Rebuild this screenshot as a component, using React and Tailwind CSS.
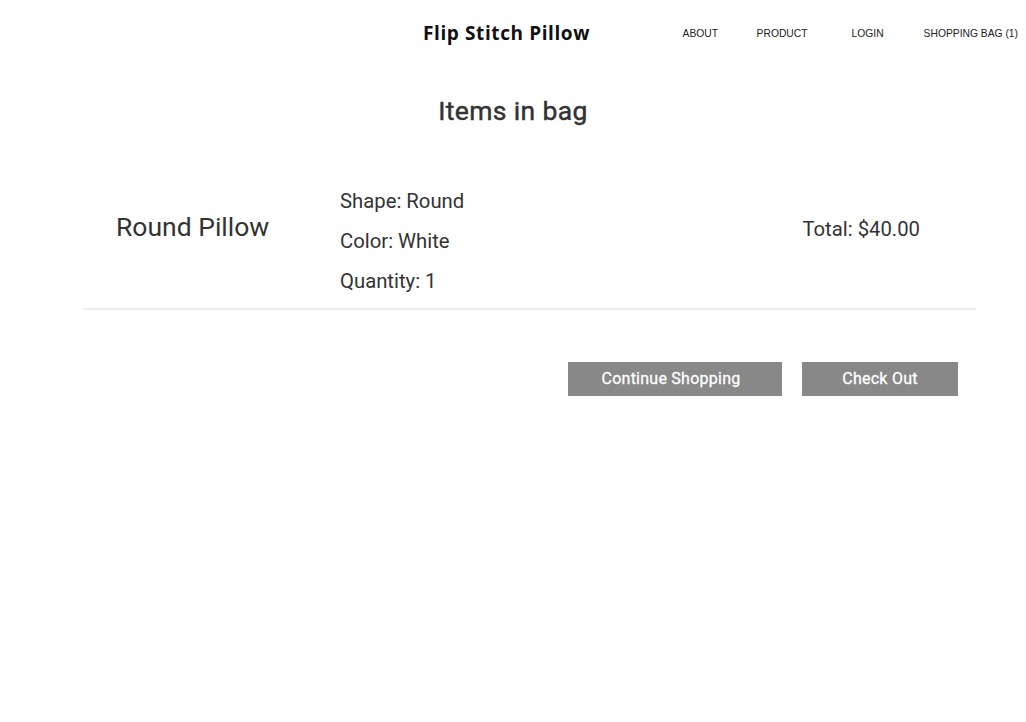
export default function App() {
  return (
    <div className="min-h-[722px] w-[1026px] bg-white" style={{ fontFamily: 'Roboto, sans-serif' }}>
      {/* Header */}
      <header className="flex h-[66px] items-center">
        <div
          className="ml-[423px] text-[19px] font-bold tracking-[0.6px] text-[#111]"
          style={{ fontFamily: '"Open Sans", sans-serif' }}
        >
          Flip Stitch Pillow
        </div>
        <nav
          className="ml-auto mt-[1px] flex items-center text-[10.3px] text-[#222]"
          style={{ fontFamily: '"Liberation Sans", Arial, sans-serif' }}
        >
          <a className="w-[74px]">ABOUT</a>
          <a className="w-[95px]">PRODUCT</a>
          <a className="w-[72px]">LOGIN</a>
          <a className="pr-[8px]">SHOPPING BAG (1)</a>
        </nav>
      </header>

      {/* Title */}
      <h1 className="mt-[29px] text-center text-[26.5px] leading-[32px] font-normal tracking-[0.35px] text-[#333] [-webkit-text-stroke:0.45px_#333]">
        Items in bag
      </h1>

      {/* Item row */}
      <div className="ml-[83px] mt-[54px] flex w-[893px] items-start border-b-2 border-[#ececec] pb-[7px] text-[#333]">
        <div className="mt-[30px] w-[257px] pl-[33px] text-[26.5px] leading-[32px]">Round Pillow</div>
        <div className="flex flex-col text-[20.3px] leading-[40px]">
          <span>Shape: Round</span>
          <span>Color: White</span>
          <span>Quantity: 1</span>
        </div>
        <div className="ml-auto mr-[56px] mt-[28px] text-[20.3px] leading-[40px]">Total: $40.00</div>
      </div>

      {/* Actions */}
      <div className="mr-[68px] mt-[52px] flex justify-end gap-[20px]">
        <button className="h-[34px] w-[214px] bg-[#888888] pr-[8px] text-[16px] tracking-[0.25px] text-white [-webkit-text-stroke:0.3px_#fff]">
          Continue Shopping
        </button>
        <button className="h-[34px] w-[156px] bg-[#888888] text-[16px] tracking-[0.25px] text-white [-webkit-text-stroke:0.3px_#fff]">
          Check Out
        </button>
      </div>
    </div>
  )
}
